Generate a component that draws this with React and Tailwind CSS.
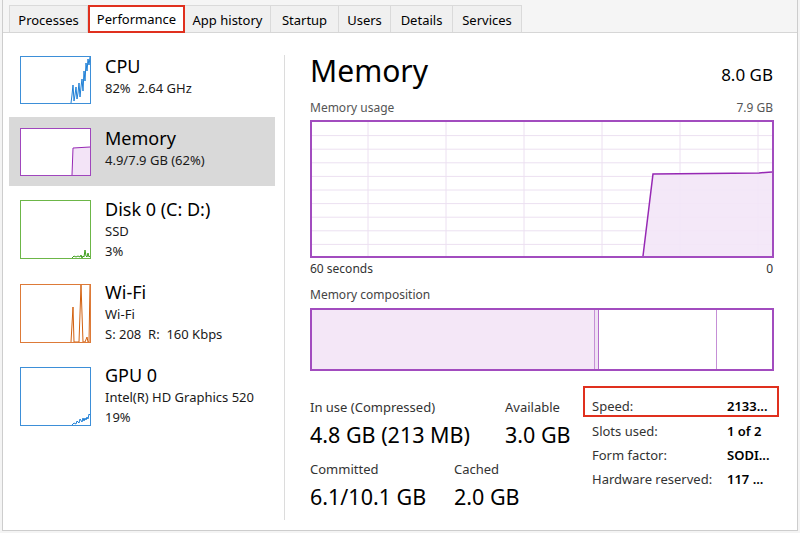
import React from "react";

const tabs = [
    { name: "Processes", w: "w-[79px]" },
    { name: "Performance", w: "w-[97px]", active: true },
    { name: "App history", w: "w-[86px]" },
    { name: "Startup", w: "w-[68px]" },
    { name: "Users", w: "w-[52px]" },
    { name: "Details", w: "w-[62px]" },
    { name: "Services", w: "w-[69px]" },
];

// Small sparkline thumbnails for the left column
function Thumb({ color, h, children }) {
    return (
        <div className={`w-[71px] ${h} shrink-0 border bg-white`} style={{ borderColor: color }}>
            <svg width="100%" height="100%" viewBox={h === "h-[48px]" ? "0 0 69 46" : "0 0 69 57"} preserveAspectRatio="none">
                {children}
            </svg>
        </div>
    );
}

function SideItem({ thumb, title, lines, selected, rowH, textTop }) {
    return (
        <div className={`flex ${rowH} pl-[11px] pt-[11px] ${selected ? "bg-[#d9d9d9]" : ""}`}>
            {thumb}
            <div className={`ml-[14px] ${textTop}`}>
                <div className="text-[18px] leading-[24px] text-black">{title}</div>
                {lines.map((l, i) => (
                    <div key={i} className="text-[13px] leading-[20px] text-[#1a1a1a] whitespace-pre">{l}</div>
                ))}
            </div>
        </div>
    );
}

function UsageChart() {
    const hLines = [];
    for (let i = 1; i < 10; i++) hLines.push(i * 13.6);
    const vLines = [56, 134, 212, 290, 368, 446];
    return (
        <div className="w-[464px] h-[138px] border-2 border-[#a24cbf] bg-white">
            <svg width="460" height="134" viewBox="0 0 460 134" preserveAspectRatio="none">
                {hLines.map((y) => (
                    <line key={y} x1="0" x2="460" y1={y} y2={y} stroke="#ece0f1" strokeWidth="1" />
                ))}
                {vLines.map((x) => (
                    <line key={x} x1={x} x2={x} y1="0" y2="134" stroke="#ece0f1" strokeWidth="1" />
                ))}
                <path d="M331 134 L341 52 L447 51 L460 50 L460 134 Z" fill="#f3e6f7" fillOpacity="0.9" />
                <path d="M331 134 L341 52 L447 51 L460 50" fill="none" stroke="#9628b4" strokeWidth="1.5" />
            </svg>
        </div>
    );
}

function Stat({ label, value, className }) {
    return (
        <div className={className}>
            <div className="text-[13px] leading-[18px] text-[#333]">{label}</div>
            <div className="text-[21.5px] leading-[30px] mt-[4px] text-black">{value}</div>
        </div>
    );
}

export default function App() {
    return (
        <div className="w-[800px] h-[533px] bg-[#f4f4f4] overflow-hidden" style={{ fontFamily: '"Segoe UI", "Noto Sans", sans-serif' }}>
            <div className="ml-[2px] w-[796px] h-[531px] border-l border-r border-b border-[#cdcdcd] bg-white flex flex-col">
                {/* Tab strip */}
                <div className="h-[33px] shrink-0 bg-[#f5f5f5] border-b border-[#d6d6d6] flex items-end pl-[6px]">
                    {tabs.map((t) =>
                        t.active ? (
                            <div key={t.name} className={`${t.w} h-[28px] -mb-px bg-white border-2 border-[#e0301e] flex items-center justify-center pt-[2px] text-[13px] text-black`}>
                                {t.name}
                            </div>
                        ) : (
                            <div key={t.name} className={`${t.w} h-[27px] bg-[#f0f0f0] border-t border-r border-[#dadada] first:border-l flex items-center justify-center pt-[3px] text-[13px] text-black`}>
                                {t.name}
                            </div>
                        )
                    )}
                </div>

                <div className="flex flex-1">
                    {/* Sidebar */}
                    <div className="w-[281px] shrink-0 pt-[12px] pl-[6px] pr-[9px] flex flex-col gap-[3px]">
                        <SideItem
                            rowH="h-[69px]"
                            textTop="-mt-[2px]"
                            title="CPU"
                            lines={["82%  2.64 GHz"]}
                            thumb={
                                <Thumb color="#3d8fd8" h="h-[48px]">
                                    <polyline points="50,46 51,38 52,28 53,44 54,38 55,30 56,42 57,36 58,26 59,40 60,30 61,22 62,34 63,14 64,24 65,6 66,14 67,2 68,8 69,0" fill="none" stroke="#1e7fd6" strokeWidth="1" />
                                </Thumb>
                            }
                        />
                        <SideItem
                            rowH="h-[69px]"
                            textTop="-mt-[2px]"
                            selected
                            title="Memory"
                            lines={["4.9/7.9 GB (62%)"]}
                            thumb={
                                <Thumb color="#a046bd" h="h-[48px]">
                                    <path d="M51 46 L52 19 L69 18 L69 46 Z" fill="#f3e4f7" />
                                    <polyline points="51,46 52,19 69,18" fill="none" stroke="#9628b4" strokeWidth="1" />
                                </Thumb>
                            }
                        />
                        <SideItem
                            rowH="h-[81px]"
                            textTop="-mt-[3px]"
                            title="Disk 0 (C: D:)"
                            lines={["SSD", "3%"]}
                            thumb={
                                <Thumb color="#6cb648" h="h-[59px]">
                                    <polyline points="51,57 53,55 55,56 57,55 59,56 60,54 61,57 62,55 63,56 64,49 65,55 66,56 67,52 68,56 69,55" fill="none" stroke="#3f9e1c" strokeWidth="1" />
                                </Thumb>
                            }
                        />
                        <SideItem
                            rowH="h-[80px]"
                            textTop="-mt-[4px]"
                            title="Wi-Fi"
                            lines={["Wi-Fi", "S: 208  R:  160 Kbps"]}
                            thumb={
                                <Thumb color="#dd7a38" h="h-[59px]">
                                    <polyline points="50,57 52,22 53,57 58,57 60,0 62,57 64,57 66,52 67,57 68,57 69,0" fill="none" stroke="#d2600f" strokeWidth="1" />
                                </Thumb>
                            }
                        />
                        <SideItem
                            rowH="h-[81px]"
                            textTop="-mt-[4px]"
                            title="GPU 0"
                            lines={["Intel(R) HD Graphics 520", "19%"]}
                            thumb={
                                <Thumb color="#3d8fd8" h="h-[59px]">
                                    <polyline points="51,57 53,55 55,56 56,53 58,55 59,51 61,54 62,50 63,53 64,50 65,52 66,49 67,51 68,46 69,47" fill="none" stroke="#1e7fd6" strokeWidth="1" />
                                </Thumb>
                            }
                        />
                    </div>

                    {/* Divider */}
                    <div className="w-px bg-[#dcdcdc] mt-[22px] mb-[10px]" />

                    {/* Main panel */}
                    <div className="flex-1 pl-[25px] pt-[16px]">
                        <div className="w-[463px] flex items-end justify-between h-[42px]">
                            <div className="text-[30px] leading-[40px] text-black">Memory</div>
                            <div className="text-[17px] leading-[24px] text-black mb-[4px]">8.0 GB</div>
                        </div>
                        <div className="w-[463px] flex justify-between text-[12px] leading-[16px] text-[#555] mt-[9px] mb-[4px]">
                            <span>Memory usage</span>
                            <span>7.9 GB</span>
                        </div>
                        <UsageChart />
                        <div className="w-[463px] flex justify-between text-[12px] leading-[16px] text-[#333] mt-[3px]">
                            <span>60 seconds</span>
                            <span>0</span>
                        </div>
                        <div className="text-[12px] leading-[16px] text-[#444] mt-[10px]">Memory composition</div>
                        <div className="mt-[5px] w-[464px] h-[63px] border-2 border-[#a24cbf] flex">
                            <div className="w-[283px] bg-[#f4e7f7] border-r border-[#c58fd6]" />
                            <div className="w-[4px] bg-[#efe2f3] border-r border-[#b36ccc]" />
                            <div className="w-[118px] bg-white border-r border-[#c58fd6]" />
                            <div className="flex-1 bg-white" />
                        </div>

                        {/* Stats */}
                        <div className="flex mt-[27px]">
                            <div className="w-[273px] flex flex-col">
                                <div className="flex">
                                    <Stat className="w-[195px]" label="In use (Compressed)" value="4.8 GB (213 MB)" />
                                    <Stat label="Available" value="3.0 GB" />
                                </div>
                                <div className="flex mt-[10px]">
                                    <Stat className="w-[144px]" label="Committed" value="6.1/10.1 GB" />
                                    <Stat label="Cached" value="2.0 GB" />
                                </div>
                            </div>
                            <div className="-mt-[12px] flex flex-col text-[13px] leading-[24px]">
                                <div className="flex border-2 border-[#e0301e] h-[31px] w-[196px] pl-[7px] pt-[6px]">
                                    <span className="w-[135px] text-[#333]">Speed:</span>
                                    <span className="font-semibold text-black">2133...</span>
                                </div>
                                <div className="flex pl-[9px] mt-[2px]">
                                    <span className="w-[135px] text-[#333]">Slots used:</span>
                                    <span className="font-semibold text-black">1 of 2</span>
                                </div>
                                <div className="flex pl-[9px]">
                                    <span className="w-[135px] text-[#333]">Form factor:</span>
                                    <span className="font-semibold text-black">SODI...</span>
                                </div>
                                <div className="flex pl-[9px]">
                                    <span className="w-[135px] text-[#333]">Hardware reserved:</span>
                                    <span className="font-semibold text-black">117 ...</span>
                                </div>
                            </div>
                        </div>
                    </div>
                </div>
            </div>
        </div>
    );
}
